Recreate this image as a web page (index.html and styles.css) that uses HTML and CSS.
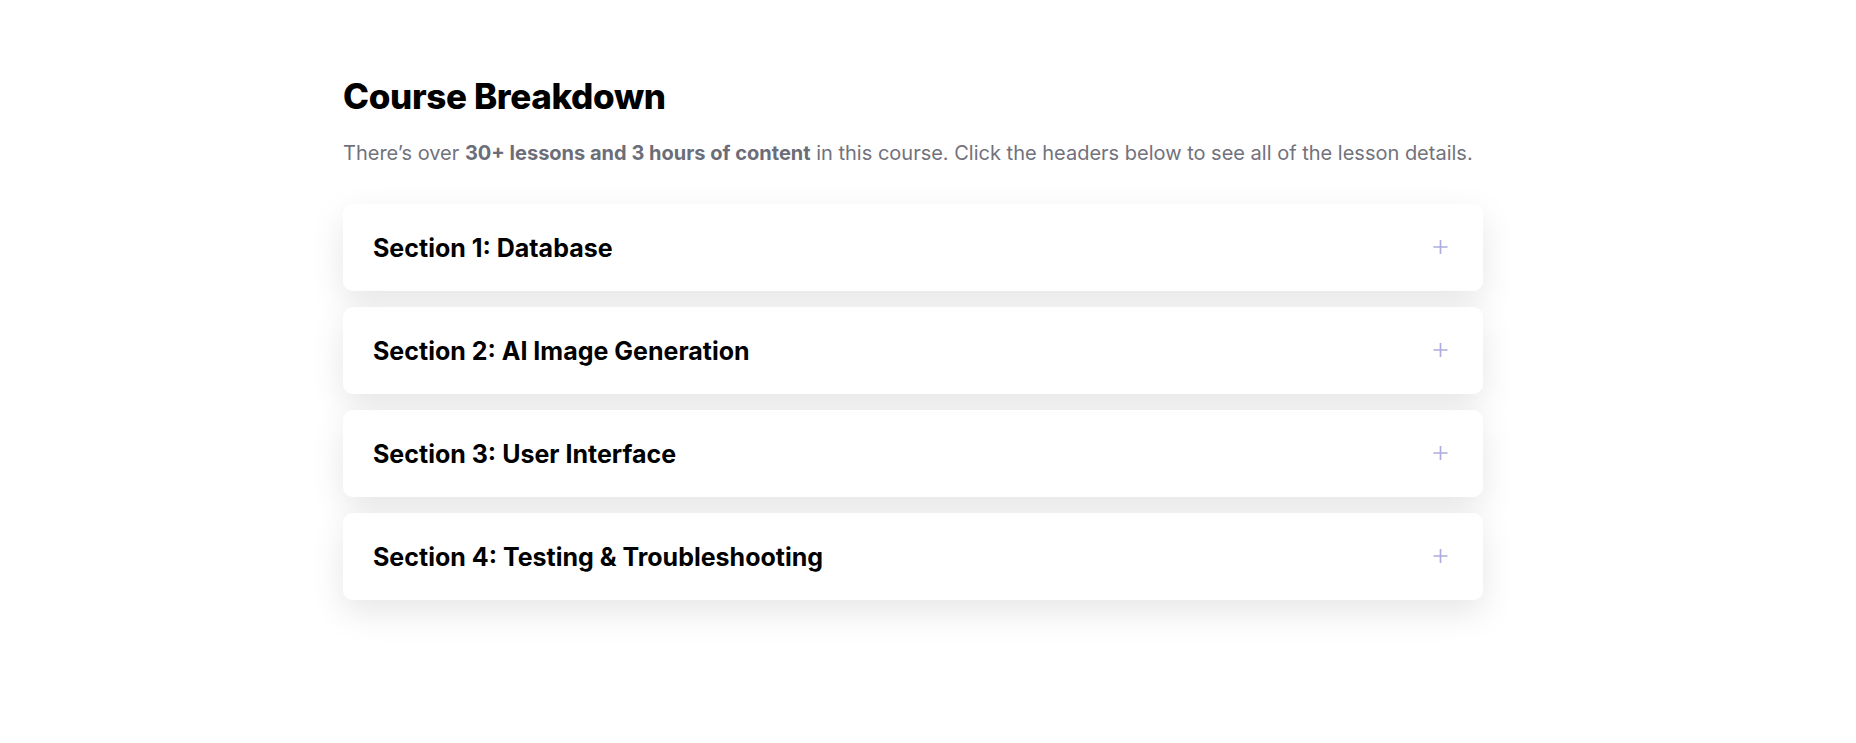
FILE: index.html
```html
<!DOCTYPE html>
<html lang="en">
<head>
<meta charset="utf-8">
<title>Course Breakdown</title>
<link rel="stylesheet" href="styles.css">
</head>
<body>
<main class="page">
  <section class="breakdown">
    <h2 class="title">Course Breakdown</h2>
    <p class="intro">There’s over <strong>30+ lessons and 3 hours of content</strong> in this course. Click the headers below to see all of the lesson details.</p>
    <div class="accordion">
      <div class="item">
        <h3 class="item-title">Section 1: Database</h3>
        <svg class="plus" viewBox="0 0 16 16" aria-hidden="true"><path d="M8 0.5V15.5M0.5 8H15.5"/></svg>
      </div>
      <div class="item">
        <h3 class="item-title">Section 2: AI Image Generation</h3>
        <svg class="plus" viewBox="0 0 16 16" aria-hidden="true"><path d="M8 0.5V15.5M0.5 8H15.5"/></svg>
      </div>
      <div class="item">
        <h3 class="item-title">Section 3: User Interface</h3>
        <svg class="plus" viewBox="0 0 16 16" aria-hidden="true"><path d="M8 0.5V15.5M0.5 8H15.5"/></svg>
      </div>
      <div class="item">
        <h3 class="item-title">Section 4: Testing &amp; Troubleshooting</h3>
        <svg class="plus" viewBox="0 0 16 16" aria-hidden="true"><path d="M8 0.5V15.5M0.5 8H15.5"/></svg>
      </div>
    </div>
  </section>
</main>
</body>
</html>
```
FILE: styles.css
```css
* { box-sizing: border-box; }

html, body {
  min-height: 100%;
}

body {
  margin: 0;
  background: #ffffff;
  font-family: Inter, "Noto Sans", "Liberation Sans", sans-serif;
  color: #000;
}

.page {
  padding: 76px 0 140px 343px;
}

.breakdown {
  width: 1140px;
}

.title {
  margin: 0;
  font-size: 35px;
  line-height: 41px;
  font-weight: 800;
  letter-spacing: -0.01em;
  color: #000;
}

.intro {
  margin: 22px 0 0;
  font-size: 20px;
  line-height: 29px;
  letter-spacing: 0;
  color: #71727c;
}

.intro strong {
  font-weight: 700;
  color: #6b6d78;
}

.accordion {
  margin-top: 36px;
  display: flex;
  flex-direction: column;
  gap: 16px;
}

.item {
  display: flex;
  align-items: center;
  justify-content: space-between;
  height: 87px;
  padding: 2px 35px 0 30px;
  background: rgba(255, 255, 255, 0.88);
  border-radius: 10px;
  box-shadow: 0 12px 34px rgba(0, 0, 0, 0.1);
}

.item-title {
  margin: 0;
  font-size: 25px;
  line-height: 33px;
  font-weight: 700;
  letter-spacing: 0;
  color: #000;
}

.plus {
  width: 15px;
  height: 16px;
  margin-top: -3px;
  fill: none;
  stroke: #acadde;
  stroke-width: 1.8;
}
```
